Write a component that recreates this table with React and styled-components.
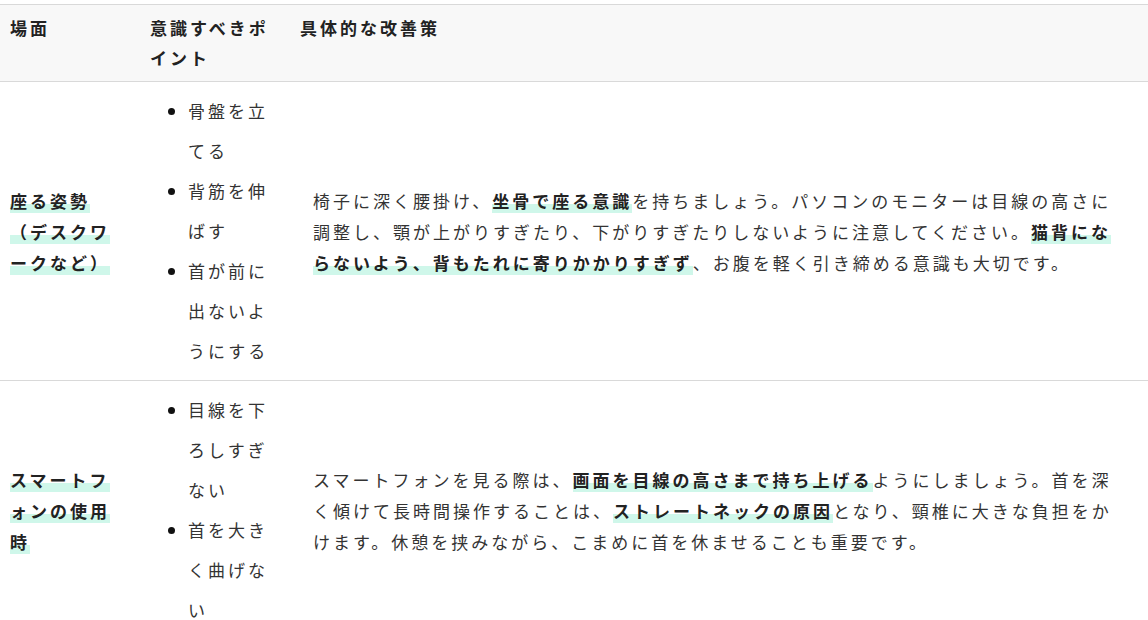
import styled, { createGlobalStyle } from 'styled-components';

const GlobalStyle = createGlobalStyle`
    html, body {
        margin: 0;
        padding: 0;
        background: #ffffff;
    }
    body {
        font-family: 'Noto Sans CJK JP', 'Noto Sans', sans-serif;
        color: #333333;
    }
`;

const Table = styled.div`
    margin-top: 4px;
    width: 100%;
    border-top: 1px solid #d9d9d9;
    font-size: 17px;
    letter-spacing: 3px;
`;

const Row = styled.div`
    display: grid;
    grid-template-columns: 140px 150px 1fr;
    border-bottom: 1px solid #d9d9d9;
    background: ${(p) => (p.$head ? '#f8f8f8' : '#ffffff')};
    align-items: ${(p) => (p.$head ? 'start' : 'center')};
`;

const HeadCell = styled.div`
    padding: 8px 10px;
    line-height: 30px;
    font-weight: 700;
    color: #222222;
`;

const Cell = styled.div`
    padding: ${(p) => (p.$wide ? '9px 25px 9px 23px' : p.$first ? '9px 20px 9px 10px' : '9px 10px')};
    line-height: 31px;
`;

const Mark = styled.strong`
    font-weight: 700;
    color: #222222;
    background: linear-gradient(transparent 64%, #cff7ea 64%);
`;

const List = styled.ul`
    margin: 0;
    padding-left: 38px;
    line-height: 40px;
`;

const Item = styled.li`
    color: #333333;
    &::marker {
        color: #111111;
    }
`;

const rows = [
    {
        scene: '座る姿勢（デスクワークなど）',
        points: ['骨盤を立てる', '背筋を伸ばす', '首が前に出ないようにする'],
        text: [
            '椅子に深く腰掛け、',
            { b: '坐骨で座る意識' },
            'を持ちましょう。パソコンのモニターは目線の高さに調整し、顎が上がりすぎたり、下がりすぎたりしないように注意してください。',
            { b: '猫背にならないよう、背もたれに寄りかかりすぎず' },
            '、お腹を軽く引き締める意識も大切です。',
        ],
    },
    {
        scene: 'スマートフォンの使用時',
        points: ['目線を下ろしすぎない', '首を大きく曲げない'],
        text: [
            'スマートフォンを見る際は、',
            { b: '画面を目線の高さまで持ち上げる' },
            'ようにしましょう。首を深く傾けて長時間操作することは、',
            { b: 'ストレートネックの原因' },
            'となり、頸椎に大きな負担をかけます。休憩を挟みながら、こまめに首を休ませることも重要です。',
        ],
    },
];

const App = () => {
    return (
        <>
            <GlobalStyle />
            <Table>
                <Row $head>
                    <HeadCell>場面</HeadCell>
                    <HeadCell>意識すべきポイント</HeadCell>
                    <HeadCell>具体的な改善策</HeadCell>
                </Row>
                {rows.map((row) => (
                    <Row key={row.scene}>
                        <Cell $first>
                            <Mark>{row.scene}</Mark>
                        </Cell>
                        <Cell>
                            <List>
                                {row.points.map((pt) => (
                                    <Item key={pt}>{pt}</Item>
                                ))}
                            </List>
                        </Cell>
                        <Cell $wide>
                            {row.text.map((part, i) =>
                                typeof part === 'string' ? part : <Mark key={i}>{part.b}</Mark>
                            )}
                        </Cell>
                    </Row>
                ))}
            </Table>
        </>
    );
};

export default App;
